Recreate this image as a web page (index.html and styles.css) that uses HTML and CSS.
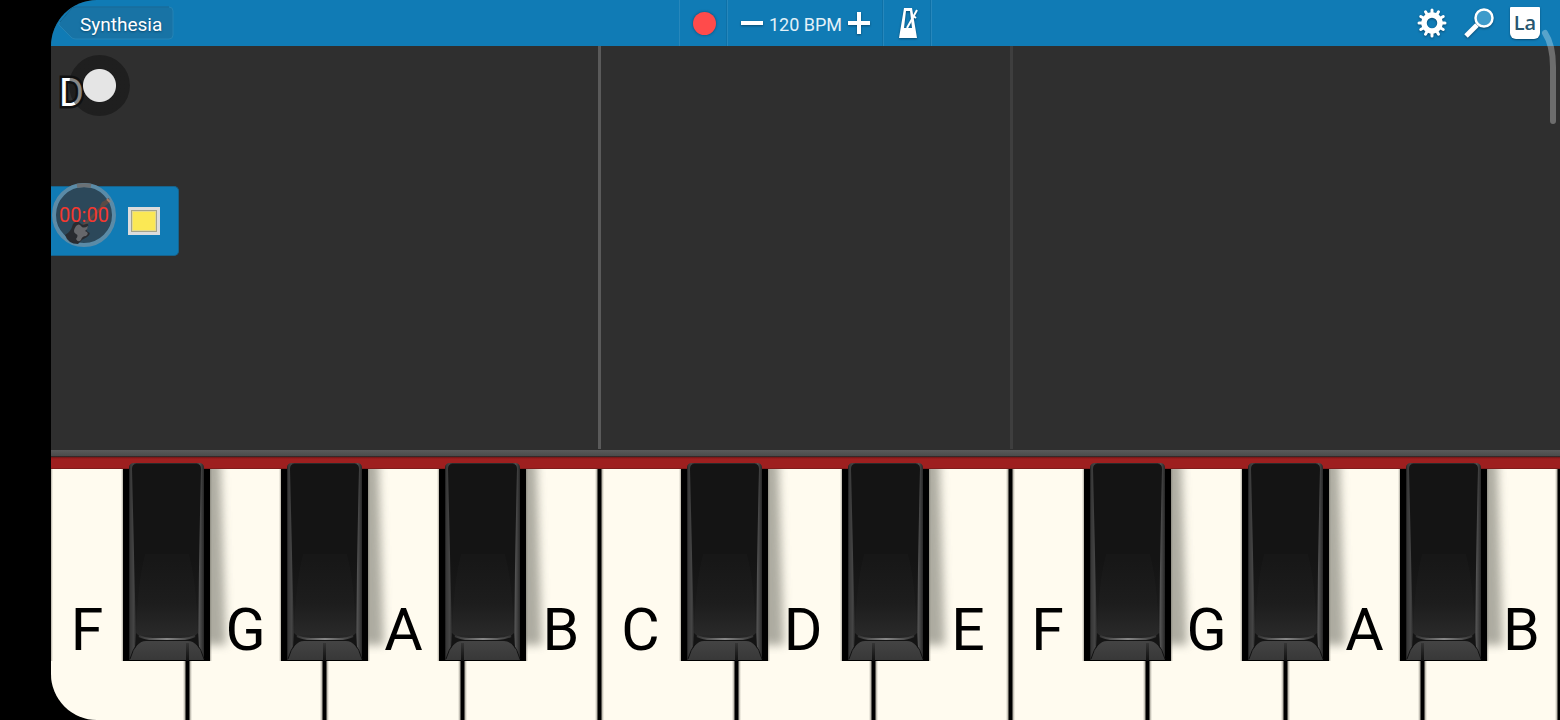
FILE: index.html
```html
<!DOCTYPE html>
<html lang="en">
<head>
    <meta charset="utf-8">
    <title>Synthesia</title>
    <link rel="stylesheet" href="styles.css">
</head>
<body>
    <!-- shared black key artwork -->
    <svg class="defs" width="0" height="0" aria-hidden="true">
        <defs>
            <linearGradient id="face" x1="0" y1="0" x2="0" y2="1">
                <stop offset="0" stop-color="#141414"/>
                <stop offset=".55" stop-color="#141414"/>
                <stop offset=".8" stop-color="#1a1a1a"/>
                <stop offset="1" stop-color="#282828"/>
            </linearGradient>
            <linearGradient id="side" x1="0" y1="0" x2="1" y2="0">
                <stop offset="0" stop-color="#1c1c1c"/>
                <stop offset=".02" stop-color="#383838"/>
                <stop offset=".06" stop-color="#444"/>
                <stop offset=".1" stop-color="#2a2a2a"/>
                <stop offset=".9" stop-color="#2a2a2a"/>
                <stop offset=".94" stop-color="#505050"/>
                <stop offset=".97" stop-color="#3c3c3c"/>
                <stop offset="1" stop-color="#262626"/>
            </linearGradient>
            <linearGradient id="lip" x1="0" y1="0" x2="0" y2="1">
                <stop offset="0" stop-color="#444"/>
                <stop offset="1" stop-color="#383838"/>
            </linearGradient>
            <linearGradient id="shine" x1="0" y1="0" x2="1" y2="0">
                <stop offset="0" stop-color="#333"/>
                <stop offset=".5" stop-color="#888"/>
                <stop offset="1" stop-color="#333"/>
            </linearGradient>
            <filter id="soft" x="-50%" y="-20%" width="200%" height="140%">
                <feGaussianBlur stdDeviation="5"/>
            </filter>
            <clipPath id="below-felt">
                <rect x="87" y="6" width="50" height="210"/>
            </clipPath>
            <g id="black-key">
                <g clip-path="url(#below-felt)">
                    <path d="M60 -20H97L103 182H60Z" fill="#77776d" opacity=".6" filter="url(#soft)"/>
                </g>
                <path d="M0 6H87V198H0Z" fill="#000"/>
                <path d="M6 197V5Q6 0 11 0H76Q81 0 81 5V197Z" fill="url(#side)"/>
                <path d="M9 6Q9 1 13 1H74Q78 1 78 6Q76 90 75 176H13Q11 90 9 6Z" fill="url(#face)"/>
                <path d="M22 91H66Q74 120 75 172H13Q14 120 22 91Z" fill="#fff" opacity=".015"/>
                <path d="M13 170Q18 176 26 176H62Q70 176 75 170L76 186H12Z" fill="#141414"/>
                <path d="M16 173Q22 176 30 176H58Q66 176 72 173" fill="none" stroke="url(#shine)" stroke-width="2"/>
                <path d="M8 195Q13 178 23 178H65Q75 178 80 195Q80 197 77 197H11Q8 197 8 195Z" fill="url(#lip)"/>
                <path d="M7 196Q10 186 14 181M81 196Q78 186 74 181" fill="none" stroke="#111" stroke-width="1"/>
            </g>
        </defs>
    </svg>

    <main class="screen">
        <header class="toolbar">
            <button class="back">
                <svg class="back-shape" width="117" height="36" viewBox="0 0 117 36">
                    <path d="M2 18L15 3Q17 2 19 2H112Q116 2 116 6V30Q116 34 112 34H19Q17 34 15 33L2 20Q1 19 2 18Z" fill="#1873a5" stroke="#2583b4"/>
                    <path d="M3 17L15 3Q17 2 19 2H112" fill="none" stroke="#12628f"/>
                </svg>
                <span>Synthesia</span>
            </button>
            <div class="transport">
                <button class="tool record" aria-label="Record"><span class="record-dot"></span></button>
                <div class="tool tempo">
                    <button aria-label="Slower">
                        <svg width="22" height="22" viewBox="0 0 22 22"><path d="M0 11H22" stroke="#fff" stroke-width="4"/></svg>
                    </button>
                    <span>120 BPM</span>
                    <button aria-label="Faster">
                        <svg width="22" height="22" viewBox="0 0 22 22"><path d="M0 11H22M11 0V22" stroke="#fff" stroke-width="4"/></svg>
                    </button>
                </div>
                <button class="tool metronome" aria-label="Metronome">
                    <svg width="22" height="32" viewBox="0 0 22 32">
                        <path fill="#fff" fill-rule="evenodd" d="M6 1H14L19 31H1ZM8 4L6 21H14L12 4Z"/>
                        <path d="M9 21L19 3" stroke="#fff" stroke-width="2"/>
                        <path d="M14 8L18 11" stroke="#fff" stroke-width="2"/>
                    </svg>
                </button>
            </div>
            <div class="options">
                <button aria-label="Settings">
                    <svg width="32" height="32" viewBox="-16 -16 32 32">
                        <circle r="8" fill="none" stroke="#fff" stroke-width="5.500"/>
                        <g stroke="#fff" stroke-width="3" stroke-linecap="round">
                            <path d="M0 -13V-9M0 13V9M-13 0H-9M13 0H9"/>
                            <path transform="rotate(30)" d="M0 -13V-9M0 13V9M-13 0H-9M13 0H9"/>
                            <path transform="rotate(60)" d="M0 -13V-9M0 13V9M-13 0H-9M13 0H9"/>
                        </g>
                    </svg>
                </button>
                <button aria-label="Zoom">
                    <svg width="32" height="32" viewBox="0 0 32 32">
                        <path d="M3 29L14 18" stroke="#fff" stroke-width="5"/>
                        <circle cx="21" cy="11" r="8.500" fill="#3e9bcb" stroke="#fff" stroke-width="2.500"/>
                    </svg>
                </button>
                <button class="labels" aria-label="Note labels">La</button>
            </div>
        </header>

        <section class="lanes">
            <div class="lane lane-low"></div>
            <div class="lane lane-mid"></div>
            <div class="lane lane-high"></div>

            <div class="chord">D</div>
            <div class="touch"></div>

            <div class="panel">
                <div class="timer">
                    <svg width="64" height="64" viewBox="0 0 64 64">
                        <circle cx="32" cy="32" r="30" fill="#2c485a" stroke="#5b8ba7" stroke-width="4"/>
                        <path d="M25 3A30 30 0 0 1 39 3" fill="none" stroke="#6b7175" stroke-width="4"/>
                        <path d="M31 43L51 23" stroke="#594b46" stroke-width="3"/>
                        <path d="M48 23L50 19L54 17L57 15L58 19L53 23L51 26Z" fill="#594b46"/>
                        <path d="M55 16L58 19" stroke="#a87b68" stroke-width="2"/>
                        <path d="M13 52Q19 49 21 41Q25 37 28 40Q30 43 34 41Q37 40 36 44Q33 47 36 49Q40 50 35 54Q30 56 26 61Q16 61 13 52Z" fill="#292b30"/>
                        <path d="M24 43Q27 40 29 43Q31 46 36 43Q36 46 33 48Q38 50 34 53Q30 53 29 57Q26 60 24 56Q27 52 24 51Q20 49 24 43Z" fill="#66676b"/>
                    </svg>
                    <span>00:00</span>
                </div>
                <button class="swatch" aria-label="Colour"></button>
            </div>
        </section>

        <div class="rail"></div>
        <div class="felt"></div>

        <section class="keyboard">
            <div class="tops">
                <div class="white f"><span>F</span></div>
                <div class="black"><svg viewBox="0 0 87 198" preserveAspectRatio="none"><use href="#black-key"/></svg></div>
                <div class="white g"><span>G</span></div>
                <div class="black"><svg viewBox="0 0 87 198" preserveAspectRatio="none"><use href="#black-key"/></svg></div>
                <div class="white a"><span>A</span></div>
                <div class="black"><svg viewBox="0 0 87 198" preserveAspectRatio="none"><use href="#black-key"/></svg></div>
                <div class="white b gap-right"><span>B</span></div>
                <div class="white c gap-left"><span>C</span></div>
                <div class="black"><svg viewBox="0 0 87 198" preserveAspectRatio="none"><use href="#black-key"/></svg></div>
                <div class="white d"><span>D</span></div>
                <div class="black"><svg viewBox="0 0 87 198" preserveAspectRatio="none"><use href="#black-key"/></svg></div>
                <div class="white e gap-right"><span>E</span></div>
                <div class="white f gap-left"><span>F</span></div>
                <div class="black"><svg viewBox="0 0 87 198" preserveAspectRatio="none"><use href="#black-key"/></svg></div>
                <div class="white g"><span>G</span></div>
                <div class="black"><svg viewBox="0 0 87 198" preserveAspectRatio="none"><use href="#black-key"/></svg></div>
                <div class="white a"><span>A</span></div>
                <div class="black"><svg viewBox="0 0 87 198" preserveAspectRatio="none"><use href="#black-key"/></svg></div>
                <div class="white b gap-right"><span>B</span></div>
            </div>
            <div class="fronts">
                <div class="front gap-right split"></div>
                <div class="front gap-left gap-right split"></div>
                <div class="front gap-left gap-right split"></div>
                <div class="front gap-left gap-right"></div>
                <div class="front gap-left gap-right split"></div>
                <div class="front gap-left gap-right split"></div>
                <div class="front gap-left gap-right"></div>
                <div class="front gap-left gap-right split"></div>
                <div class="front gap-left gap-right split"></div>
                <div class="front gap-left gap-right split"></div>
                <div class="front gap-left gap-right"></div>
            </div>
        </section>

        <svg class="scroll-arc" width="20" height="100" viewBox="0 0 20 100">
            <path d="M5 4Q13 16 13 38V92" fill="none" stroke="#fff" stroke-opacity=".3" stroke-width="6" stroke-linecap="round"/>
        </svg>
    </main>
</body>
</html>
```
FILE: styles.css
```css
* {
    box-sizing: border-box;
}
body {
    margin: 0;
    background: #000;
    font-family: Roboto, "Liberation Sans", sans-serif;
}
button {
    border: none;
    padding: 0;
    background: none;
    color: inherit;
    font: inherit;
    cursor: pointer;
}
svg {
    display: block;
}
.defs {
    position: absolute;
}
.screen {
    position: relative;
    display: flex;
    flex-direction: column;
    min-height: 100vh;
    margin-left: 51px;
    background: #2f2f2f;
    border-radius: 46px 0 0 46px;
    overflow: hidden;
}

/* toolbar */
.toolbar {
    display: grid;
    grid-template-columns: 1fr auto 1fr;
    align-items: center;
    height: 46px;
    background: #107bb5;
    color: #fff;
}
.back {
    position: relative;
    justify-self: start;
    width: 117px;
    height: 36px;
    margin-left: 6px;
    padding: 3px 0 0 23px;
    text-align: left;
    font-size: 19px;
    line-height: 33px;
    text-shadow: 0 1px 2px #0a4a70;
}
.back-shape {
    position: absolute;
    top: 0;
    left: 0;
}
.back span {
    position: relative;
}
.transport {
    display: flex;
    height: 46px;
    border-left: 1px solid #2787bb;
}
.tool {
    display: flex;
    align-items: center;
    justify-content: center;
    height: 46px;
    border-right: 1px solid #2787bb;
    box-shadow: inset -1px 0 #0e71a7;
}
.tool svg,
.options svg {
    filter: drop-shadow(0 1px 1px #0a4a70);
}
.record,
.metronome {
    width: 48px;
    padding-left: 2px;
}
.record-dot {
    width: 23px;
    height: 23px;
    border-radius: 50%;
    background: #ff4b4b;
    box-shadow: 0 0 3px #0a4a70;
}
.tempo {
    gap: 6px;
    width: 156px;
    font-size: 18px;
}
.tempo span {
    padding-top: 2px;
    color: #e3f1f8;
}
.options {
    display: flex;
    justify-self: end;
    align-items: center;
    gap: 15px;
    padding-right: 20px;
}
.labels {
    width: 30px;
    height: 32px;
    border-radius: 1px 1px 6px 6px;
    background: #fff;
    box-shadow: 0 1px 2px #0a4a70;
    color: #27566f;
    font-family: "Open Sans", sans-serif;
    font-size: 20px;
    font-weight: 600;
    line-height: 32px;
}

/* falling note area */
.lanes {
    position: relative;
    display: flex;
    flex: 1;
    min-height: 220px;
    padding-bottom: 1px;
}
.lane {
    flex: 4;
}
.lane-low {
    border-right: 3px solid #5a5a5a;
}
.lane-mid {
    flex: 3;
    border-right: 3px solid #3e3e3e;
}
.chord {
    position: absolute;
    top: 29px;
    left: 8px;
    color: #fff;
    font-size: 38px;
    line-height: 36px;
    paint-order: stroke;
    -webkit-text-stroke: 5px #111;
}
.touch {
    position: absolute;
    top: 9px;
    left: 18px;
    width: 61px;
    height: 61px;
    border-radius: 50%;
    background: radial-gradient(circle, #e5e5e5 16px, rgba(15, 15, 15, 0.5) 17px);
}
.panel {
    position: absolute;
    top: 140px;
    left: 0;
    display: flex;
    align-items: center;
    gap: 12px;
    width: 128px;
    height: 70px;
    padding-left: 1px;
    border: 1px solid #17638c;
    border-left: none;
    border-radius: 0 5px 5px 0;
    background: #107bb5;
}
.timer {
    position: relative;
    width: 64px;
    margin-top: -12px;
}
.timer span {
    position: absolute;
    inset: 0;
    color: #f4382f;
    font-size: 20px;
    line-height: 64px;
    text-align: center;
}
.swatch {
    width: 32px;
    height: 28px;
    border: 3px solid #dcdcdc;
    outline: 1px solid #a3a38c;
    outline-offset: -4px;
    background: #fbe854;
    box-shadow: inset 0 0 0 2px #e3d98f;
}

/* rail and felt strip */
.rail {
    height: 7px;
    background: linear-gradient(#5a5a5a, #4c4c4c 80%, #2a1515);
}
.felt {
    height: 12px;
    background: linear-gradient(#6f1616, #9e1f1f 2px, #9e1f1f 11px, #621818);
}

/* keyboard */
.tops {
    display: flex;
    height: 192px;
}
.white,
.front {
    --left: #b5b1a6 0, #fffbef 2px;
    --right: #b5b1a6 0, #fffbef00 2px;
    position: relative;
    background: linear-gradient(to left, var(--right)), linear-gradient(to right, var(--left));
}
.gap-left {
    --left: #000 1px, #b5b1a6 2px, #fffbef 4px;
}
.gap-right {
    --right: #000 2px, #b5b1a6 3px, #fffbef00 5px;
}
.white {
    display: flex;
    align-items: flex-end;
    justify-content: center;
    min-width: 0;
    font-size: 59px;
    line-height: 62px;
}
.white span {
    position: relative;
    z-index: 2;
}
.f {
    flex: 72;
}
.g,
.a {
    flex: 71;
}
.b,
.d {
    flex: 74;
}
.c {
    flex: 81;
}
.e {
    flex: 82;
}
.f.gap-left,
.b:last-child {
    flex: 73;
}
.b span,
.d span,
.e span {
    margin-right: 4px;
}
.black {
    position: relative;
    z-index: 1;
    flex: 87;
    min-width: 0;
    margin-top: -6px;
}
.black svg {
    width: 100%;
    height: 198px;
    overflow: visible;
}
.fronts {
    display: grid;
    grid-template-columns: repeat(11, 1fr);
    height: 59px;
}
.front:first-child {
    --left: #fffbef 0, #fffbef 2px;
}
.split::after {
    content: "";
    position: absolute;
    z-index: 2;
    top: -18px;
    right: -1px;
    width: 3px;
    height: 18px;
    background: linear-gradient(rgba(0, 0, 0, 0.2), #111);
}

.scroll-arc {
    position: absolute;
    top: 29px;
    right: 0;
}
```
